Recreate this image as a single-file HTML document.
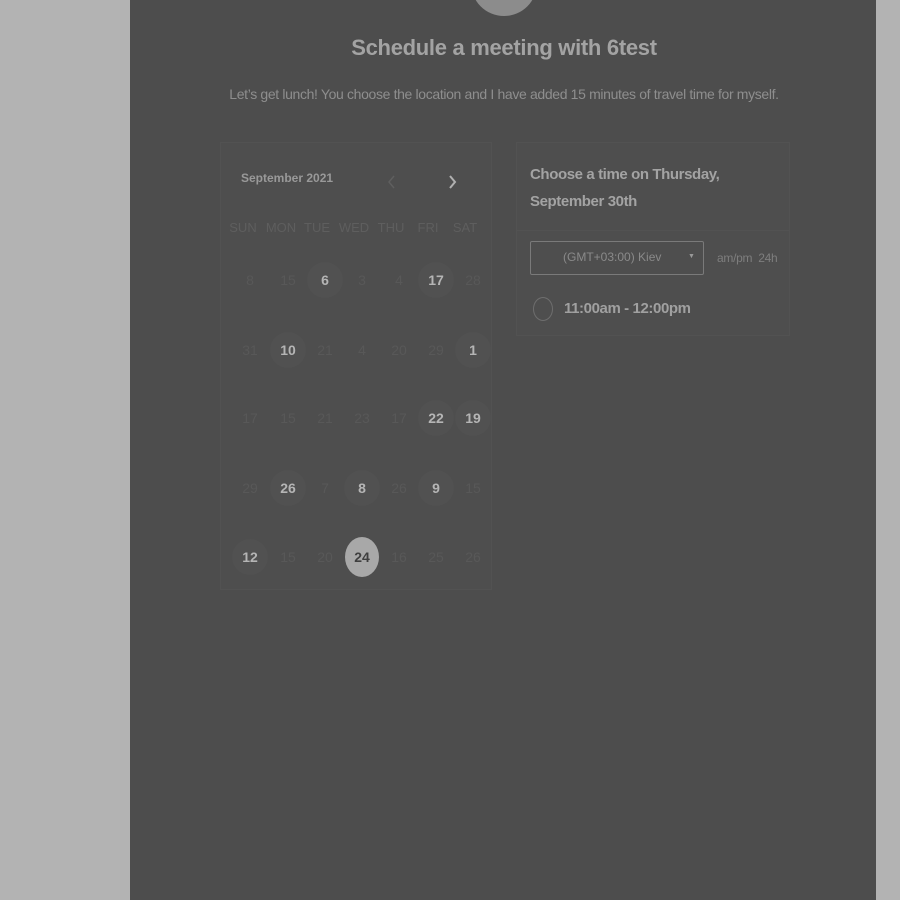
<!DOCTYPE html>
<html><head><style>
body{margin:0;width:900px;height:900px;background:#b3b3b3;font-family:"Liberation Sans",sans-serif;position:relative;overflow:hidden}
#main{position:absolute;left:130px;top:0;width:746px;height:900px;background:#4d4d4d}
.abs{position:absolute}
.av{left:471px;top:-50px;width:66px;height:66px;border-radius:50%;background:#8c8c8c}
h1{position:absolute;left:0;width:1008px;top:35px;margin:0;text-align:center;font-size:22px;font-weight:bold;color:#a3a3a3;letter-spacing:-0.3px}
.sub{left:0;width:1008px;top:86px;text-align:center;font-size:14px;color:#8e8e8e;letter-spacing:-0.35px}
.card{border:1px solid #525252;background:#4e4e4e}
.d{position:absolute;width:36px;height:36px;margin-left:-18px;margin-top:-18px;border-radius:50%;text-align:center;line-height:36px;font-size:14px;color:#585858}
.d.b{background:#515151;color:#b5b5b5;font-weight:bold}
.d.s{background:#a8a8a8;color:#3f3f3f;font-weight:bold;width:34px;height:40px;line-height:40px;margin-left:-17px;margin-top:-20px}
.wd{position:absolute;top:220px;font-size:13px;color:#5e5e5e;width:40px;margin-left:-20px;text-align:center}
</style></head><body>
<div id="main"></div>
<div class="abs av"></div>
<h1>Schedule a meeting with 6test</h1>
<div class="abs sub">Let’s get lunch! You choose the location and I have added 15 minutes of travel time for myself.</div>
<div class="abs card" style="left:220px;top:142px;width:270px;height:446px"></div>
<div class="abs" style="left:241px;top:171px;font-size:12px;font-weight:bold;color:#999">September 2021</div>
<svg class="abs" style="left:386px;top:174px" width="12" height="16"><path d="M8 2 L3 8 L8 14" stroke="#5f5f5f" stroke-width="1.5" fill="none"/></svg>
<svg class="abs" style="left:447px;top:174px" width="12" height="16"><path d="M3 2 L8 8 L3 14" stroke="#b0b0b0" stroke-width="2" fill="none"/></svg>
<div class="wd" style="left:243px">SUN</div><div class="wd" style="left:281px">MON</div><div class="wd" style="left:317px">TUE</div><div class="wd" style="left:354px">WED</div><div class="wd" style="left:391px">THU</div><div class="wd" style="left:428px">FRI</div><div class="wd" style="left:465px">SAT</div>
<div id="g"></div>
<div class="abs card" style="left:516px;top:142px;width:272px;height:192px"></div>
<div class="abs" style="left:516px;top:230px;width:273px;height:1px;background:#525252"></div>
<div class="abs" style="left:530px;top:161px;font-size:15px;font-weight:bold;color:#a3a3a3;line-height:27px;letter-spacing:-0.4px">Choose a time on Thursday,<br>September 30th</div>
<div class="abs" style="left:530px;top:241px;width:172px;height:32px;border:1px solid #7a7a7a;border-radius:2px"></div>
<div class="abs" style="left:563px;top:250px;font-size:12px;color:#8a8a8a">(GMT+03:00) Kiev</div>
<div class="abs" style="left:688px;top:253px;font-size:7px;color:#999">▼</div>
<div class="abs" style="left:717px;top:251px;font-size:12px;color:#7e7e7e;letter-spacing:-0.3px">am/pm&nbsp;&nbsp;24h</div>
<div class="abs" style="left:533px;top:297px;width:18px;height:22px;border:1.5px solid #6e6e6e;border-radius:50%"></div>
<div class="abs" style="left:564px;top:300px;font-size:15px;font-weight:bold;color:#a0a0a0;letter-spacing:-0.4px">11:00am - 12:00pm</div>
<script>
var xs=[250,288,325,362,399,436,473],ys=[280,350,418,488,557];
var rows=[["8","15","*6","3","4","*17","28"],["31","*10","21","4","20","29","*1"],["17","15","21","23","17","*22","*19"],["29","*26","7","*8","26","*9","15"],["*12","15","20","!24","16","25","26"]];
var h="";rows.forEach(function(r,i){r.forEach(function(c,j){var cl="d";if(c[0]=="*"){cl+=" b";c=c.slice(1)}else if(c[0]=="!"){cl+=" s";c=c.slice(1)}h+='<div class="'+cl+'" style="left:'+xs[j]+'px;top:'+ys[i]+'px">'+c+'</div>'})});
document.getElementById("g").innerHTML=h;
</script>
</body></html>
